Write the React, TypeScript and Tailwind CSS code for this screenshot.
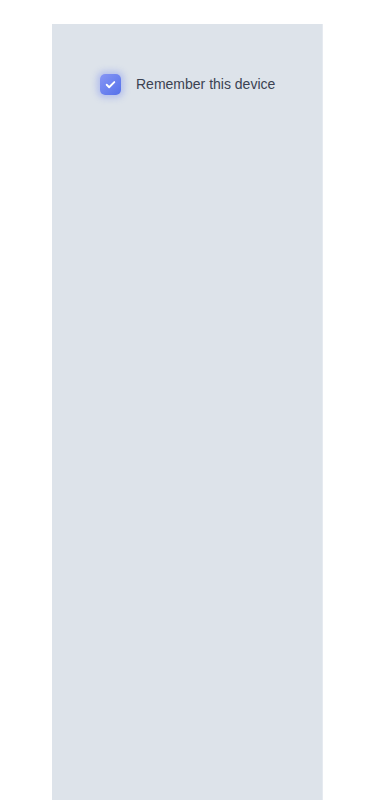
import React from "react";

export default function App() {
  return (
    <div className="w-[375px] h-[800px] bg-white overflow-hidden" style={{ fontFamily: "'Liberation Sans', Arial, sans-serif" }}>
      <div className="ml-[52px] mt-[24px] w-[271px] h-[776px] bg-[#dde3ea] border-r border-[#e6eaf0] pt-[50px] pl-[48px]">
        <label className="flex items-center gap-[15px]">
          <span className="w-[21px] h-[21px] rounded-[5px] bg-gradient-to-br from-[#8796f4] to-[#5570ea] shadow-[0_0_6px_3px_rgba(120,140,240,0.4)] flex items-center justify-center">
            <svg width="13" height="13" viewBox="0 0 24 24" fill="none" stroke="white" strokeWidth="3.5" strokeLinecap="round" strokeLinejoin="round">
              <path d="M5 12.5l4.5 4.5L19 7.5" />
            </svg>
          </span>
          <span className="text-[14px] text-[#3b4252] leading-[21px]">Remember this device</span>
        </label>
      </div>
    </div>
  );
}
